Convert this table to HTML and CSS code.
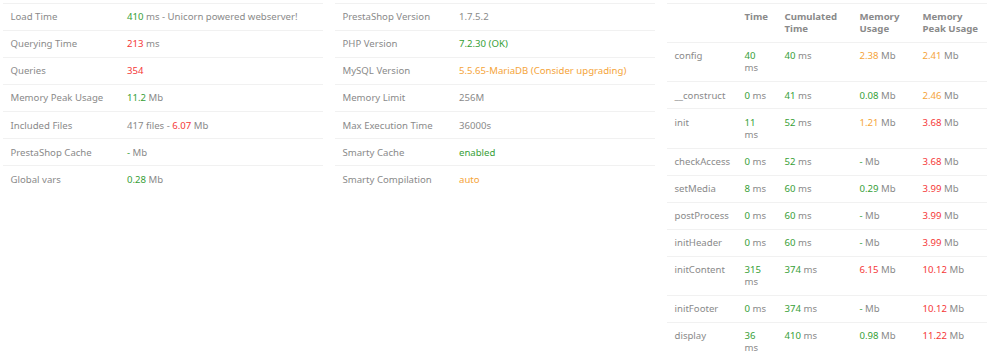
FILE: index.html
```html
<!DOCTYPE html>
<html lang="en">
<head>
<meta charset="utf-8">
<title>Profiling</title>
<link rel="stylesheet" href="styles.css">
</head>
<body>
<div class="profiling">
  <div class="panel">
    <table class="ptable summary">
      <tbody>
        <tr><td class="lbl">Load Time</td><td><span class="ok">410</span> ms - Unicorn powered webserver!</td></tr>
        <tr><td class="lbl">Querying Time</td><td><span class="bad">213</span> ms</td></tr>
        <tr><td class="lbl">Queries</td><td><span class="bad">354</span></td></tr>
        <tr><td class="lbl">Memory Peak Usage</td><td><span class="ok">11.2</span> Mb</td></tr>
        <tr><td class="lbl">Included Files</td><td>417 files - <span class="bad">6.07</span> Mb</td></tr>
        <tr><td class="lbl">PrestaShop Cache</td><td><span class="ok">-</span> Mb</td></tr>
        <tr><td class="lbl">Global vars</td><td><span class="ok">0.28</span> Mb</td></tr>
      </tbody>
    </table>
  </div>
  <div class="panel">
    <table class="ptable summary">
      <tbody>
        <tr><td class="lbl">PrestaShop Version</td><td>1.7.5.2</td></tr>
        <tr><td class="lbl">PHP Version</td><td><span class="ok">7.2.30 (OK)</span></td></tr>
        <tr><td class="lbl">MySQL Version</td><td><span class="warn">5.5.65-MariaDB (Consider upgrading)</span></td></tr>
        <tr><td class="lbl">Memory Limit</td><td>256M</td></tr>
        <tr><td class="lbl">Max Execution Time</td><td>36000s</td></tr>
        <tr><td class="lbl">Smarty Cache</td><td><span class="ok">enabled</span></td></tr>
        <tr><td class="lbl">Smarty Compilation</td><td><span class="warn">auto</span></td></tr>
      </tbody>
    </table>
  </div>
  <div class="panel">
    <table class="ptable steps">
      <thead>
        <tr>
          <th class="c-step"></th>
          <th class="c-time">Time</th>
          <th class="c-cum">Cumulated Time</th>
          <th class="c-mem">Memory Usage</th>
          <th class="c-peak">Memory Peak Usage</th>
        </tr>
      </thead>
      <tbody>
        <tr><td>config</td><td><span class="ok">40</span> ms</td><td><span class="ok">40</span> ms</td><td><span class="warn">2.38</span> Mb</td><td><span class="warn">2.41</span> Mb</td></tr>
        <tr><td>__construct</td><td><span class="ok">0</span> ms</td><td><span class="ok">41</span> ms</td><td><span class="ok">0.08</span> Mb</td><td><span class="warn">2.46</span> Mb</td></tr>
        <tr><td>init</td><td><span class="ok">11</span> ms</td><td><span class="ok">52</span> ms</td><td><span class="warn">1.21</span> Mb</td><td><span class="bad">3.68</span> Mb</td></tr>
        <tr><td>checkAccess</td><td><span class="ok">0</span> ms</td><td><span class="ok">52</span> ms</td><td><span class="ok">-</span> Mb</td><td><span class="bad">3.68</span> Mb</td></tr>
        <tr><td>setMedia</td><td><span class="ok">8</span> ms</td><td><span class="ok">60</span> ms</td><td><span class="ok">0.29</span> Mb</td><td><span class="bad">3.99</span> Mb</td></tr>
        <tr><td>postProcess</td><td><span class="ok">0</span> ms</td><td><span class="ok">60</span> ms</td><td><span class="ok">-</span> Mb</td><td><span class="bad">3.99</span> Mb</td></tr>
        <tr><td>initHeader</td><td><span class="ok">0</span> ms</td><td><span class="ok">60</span> ms</td><td><span class="ok">-</span> Mb</td><td><span class="bad">3.99</span> Mb</td></tr>
        <tr><td>initContent</td><td><span class="ok">315</span> ms</td><td><span class="ok">374</span> ms</td><td><span class="bad">6.15</span> Mb</td><td><span class="bad">10.12</span> Mb</td></tr>
        <tr><td>initFooter</td><td><span class="ok">0</span> ms</td><td><span class="ok">374</span> ms</td><td><span class="ok">-</span> Mb</td><td><span class="bad">10.12</span> Mb</td></tr>
        <tr><td>display</td><td><span class="ok">36</span> ms</td><td><span class="ok">410</span> ms</td><td><span class="ok">0.98</span> Mb</td><td><span class="bad">11.22</span> Mb</td></tr>
      </tbody>
    </table>
  </div>
</div>
</body>
</html>
```
FILE: styles.css
```css
html, body {
  margin: 0;
  padding: 0;
  background: #ffffff;
}
body {
  font-family: "Noto Sans", "Open Sans", sans-serif;
  font-size: 9.6px;
  line-height: 12.1px;
  color: #8a8a8a;
}
.profiling {
  display: grid;
  grid-template-columns: repeat(3, 320px);
  column-gap: 12px;
  padding: 3px 0 0 3px;
  align-items: start;
}
.ptable {
  width: 100%;
  border-collapse: collapse;
  table-layout: fixed;
}
.ptable td, .ptable th {
  border-top: 1px solid #f1f1f1;
  padding: 7.2px 7.5px 6.8px;
  text-align: left;
  vertical-align: top;
  font-weight: normal;
}
.summary .lbl {
  width: 101.5px;
}
.steps th {
  font-weight: bold;
}
.steps .c-step { width: 55px; }
.steps .c-time { width: 25px; }
.steps .c-cum { width: 60px; }
.steps .c-mem { width: 48px; }
.steps .c-peak { width: 57px; }
.ok { color: #37a037; }
.bad { color: #f53838; }
.warn { color: #f5a43a; }
```
